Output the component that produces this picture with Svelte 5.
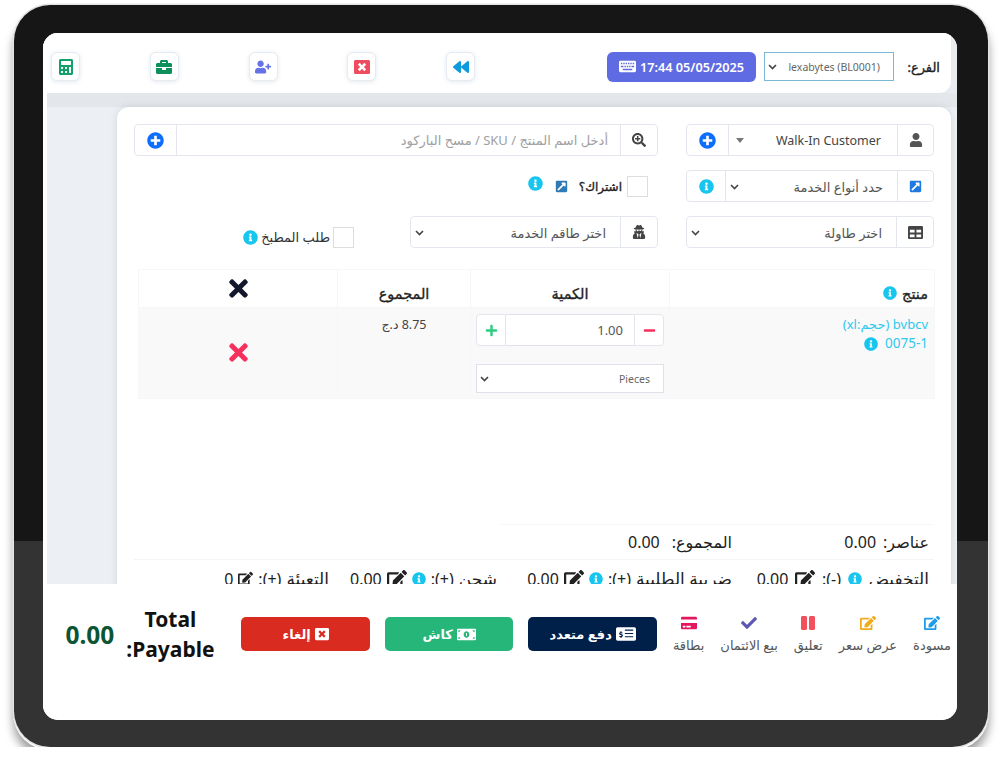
<script>
  const icons = {
    plusCircle: [512, 'M256 8C119 8 8 119 8 256s111 248 248 248 248-111 248-248S393 8 256 8zm144 276c0 6.6-5.4 12-12 12h-92v92c0 6.6-5.4 12-12 12h-56c-6.6 0-12-5.4-12-12v-92h-92c-6.6 0-12-5.4-12-12v-56c0-6.6 5.4-12 12-12h92v-92c0-6.6 5.4-12 12-12h56c6.6 0 12 5.4 12 12v92h92c6.6 0 12 5.4 12 12v56z'],
    info: [512, 'M256 8C119.043 8 8 119.083 8 256c0 136.997 111.043 248 248 248s248-111.003 248-248C504 119.083 392.957 8 256 8zm0 110c23.196 0 42 18.804 42 42s-18.804 42-42 42-42-18.804-42-42 18.804-42 42-42zm56 254c0 6.627-5.373 12-12 12h-88c-6.627 0-12-5.373-12-12v-24c0-6.627 5.373-12 12-12h12v-64h-12c-6.627 0-12-5.373-12-12v-24c0-6.627 5.373-12 12-12h64c6.627 0 12 5.373 12 12v100h12c6.627 0 12 5.373 12 12v24z'],
    times: [352, 'M242.72 256l100.07-100.07c12.28-12.28 12.28-32.19 0-44.48l-22.24-22.24c-12.28-12.28-32.19-12.28-44.48 0L176 189.28 75.93 89.21c-12.28-12.28-32.19-12.28-44.48 0L9.21 111.45c-12.28 12.28-12.28 32.19 0 44.48L109.28 256 9.21 356.07c-12.28 12.28-12.28 32.19 0 44.48l22.24 22.24c12.28 12.28 32.2 12.28 44.48 0L176 322.72l100.07 100.07c12.28 12.28 32.2 12.28 44.48 0l22.24-22.24c12.28-12.28 12.28-32.19 0-44.48L242.72 256z'],
    user: [448, 'M224 256c70.7 0 128-57.3 128-128S294.7 0 224 0 96 57.3 96 128s57.3 128 128 128zm89.6 32h-16.7c-22.2 10.2-46.9 16-72.9 16s-50.6-5.8-72.9-16h-16.7C60.2 288 0 348.2 0 422.4V464c0 26.5 21.5 48 48 48h352c26.5 0 48-21.5 48-48v-41.6c0-74.2-60.2-134.4-134.4-134.4z'],
    userPlus: [640, 'M624 208h-64v-64c0-8.8-7.2-16-16-16h-32c-8.8 0-16 7.2-16 16v64h-64c-8.8 0-16 7.2-16 16v32c0 8.8 7.2 16 16 16h64v64c0 8.8 7.2 16 16 16h32c8.8 0 16-7.2 16-16v-64h64c8.8 0 16-7.2 16-16v-32c0-8.8-7.2-16-16-16zm-400 48c70.7 0 128-57.3 128-128S294.7 0 224 0 96 57.3 96 128s57.3 128 128 128zm89.6 32h-16.7c-22.2 10.2-46.9 16-72.9 16s-50.6-5.8-72.9-16h-16.7C60.2 288 0 348.2 0 422.4V464c0 26.5 21.5 48 48 48h352c26.5 0 48-21.5 48-48v-41.6c0-74.2-60.2-134.4-134.4-134.4z'],
    backward: [512, 'M11.5 280.6l192 160c20.6 17.2 52.5 2.8 52.5-24.6V96c0-27.4-31.9-41.8-52.5-24.6l-192 160c-15.3 12.8-15.3 36.4 0 49.2zm256 0l192 160c20.6 17.2 52.5 2.8 52.5-24.6V96c0-27.4-31.9-41.8-52.5-24.6l-192 160c-15.3 12.8-15.3 36.4 0 49.2z'],
    windowClose: [512, 'M464 32H48C21.5 32 0 53.5 0 80v352c0 26.5 21.5 48 48 48h416c26.5 0 48-21.5 48-48V80c0-26.5-21.5-48-48-48zm-83.6 290.5c4.8 4.8 4.8 12.6 0 17.4l-40.5 40.5c-4.8 4.8-12.6 4.8-17.4 0L256 313.3l-66.5 67.1c-4.8 4.8-12.6 4.8-17.4 0l-40.5-40.5c-4.8-4.8-4.8-12.6 0-17.4l67.1-66.5-67.1-66.5c-4.8-4.8-4.8-12.6 0-17.4l40.5-40.5c4.8-4.8 12.6-4.8 17.4 0l66.5 67.1 66.5-67.1c4.8-4.8 12.6-4.8 17.4 0l40.5 40.5c4.8 4.8 4.8 12.6 0 17.4L313.3 256l67.1 66.5z'],
    briefcase: [512, 'M320 336c0 8.84-7.16 16-16 16h-96c-8.84 0-16-7.16-16-16v-48H0v144c0 25.6 22.4 48 48 48h416c25.6 0 48-22.4 48-48V288H320v48zm144-208h-80V80c0-25.6-22.4-48-48-48H176c-25.6 0-48 22.4-48 48v48H48c-25.6 0-48 22.4-48 48v80h512v-80c0-25.6-22.4-48-48-48zm-144 0H192V96h128v32z'],
    calculator: [448, 'M400 0H48C22.4 0 0 22.4 0 48v416c0 25.6 22.4 48 48 48h352c25.6 0 48-22.4 48-48V48c0-25.6-22.4-48-48-48zM128 435.2c0 6.4-6.4 12.8-12.8 12.8H76.8c-6.4 0-12.8-6.4-12.8-12.8v-38.4c0-6.4 6.4-12.8 12.8-12.8h38.4c6.4 0 12.8 6.4 12.8 12.8v38.4zm0-128c0 6.4-6.4 12.8-12.8 12.8H76.8c-6.4 0-12.8-6.4-12.8-12.8v-38.4c0-6.4 6.4-12.8 12.8-12.8h38.4c6.4 0 12.8 6.4 12.8 12.8v38.4zm128 128c0 6.4-6.4 12.8-12.8 12.8h-38.4c-6.4 0-12.8-6.4-12.8-12.8v-38.4c0-6.4 6.4-12.8 12.8-12.8h38.4c6.4 0 12.8 6.4 12.8 12.8v38.4zm0-128c0 6.4-6.4 12.8-12.8 12.8h-38.4c-6.4 0-12.8-6.4-12.8-12.8v-38.4c0-6.4 6.4-12.8 12.8-12.8h38.4c6.4 0 12.8 6.4 12.8 12.8v38.4zm128 128c0 6.4-6.4 12.8-12.8 12.8h-38.4c-6.4 0-12.8-6.4-12.8-12.8V268.8c0-6.4 6.4-12.8 12.8-12.8h38.4c6.4 0 12.8 6.4 12.8 12.8v166.4zm0-256c0 6.4-6.4 12.8-12.8 12.8H76.8c-6.4 0-12.8-6.4-12.8-12.8V76.8C64 70.4 70.4 64 76.8 64h294.4c6.4 0 12.8 6.4 12.8 12.8v102.4z'],
    searchPlus: [512, 'M304 192v32c0 6.6-5.4 12-12 12h-56v56c0 6.6-5.4 12-12 12h-32c-6.6 0-12-5.4-12-12v-56h-56c-6.6 0-12-5.4-12-12v-32c0-6.6 5.4-12 12-12h56v-56c0-6.6 5.4-12 12-12h32c6.6 0 12 5.4 12 12v56h56c6.6 0 12 5.4 12 12zm201 284.7L476.7 505c-9.4 9.4-24.6 9.4-33.9 0L343 405.3c-4.5-4.5-7-10.6-7-17V372c-35.3 27.6-79.7 44-128 44C93.1 416 0 322.9 0 208S93.1 0 208 0s208 93.1 208 208c0 48.3-16.4 92.7-44 128h16.3c6.4 0 12.5 2.5 17 7l99.7 99.7c9.3 9.4 9.3 24.6 0 34zM344 208c0-75.2-60.8-136-136-136S72 132.8 72 208s60.8 136 136 136 136-60.8 136-136z'],
    external: [448, 'M448 80v352c0 26.51-21.49 48-48 48H48c-26.51 0-48-21.49-48-48V80c0-26.51 21.49-48 48-48h352c26.51 0 48 21.49 48 48zm-88 16H248.029c-21.313 0-32.08 25.861-16.971 40.971l31.984 31.987L67.515 364.485c-4.686 4.686-4.686 12.284 0 16.971l31.029 31.029c4.687 4.686 12.285 4.686 16.971 0l195.526-195.526 31.988 31.991C357.058 263.977 384 253.425 384 231.979V120c0-13.255-10.745-24-24-24z'],
    table: [512, 'M464 32H48C21.49 32 0 53.49 0 80v352c0 26.51 21.49 48 48 48h416c26.51 0 48-21.49 48-48V80c0-26.51-21.49-48-48-48zM224 416H64v-96h160v96zm0-160H64v-96h160v96zm224 160H288v-96h160v96zm0-160H288v-96h160v96z'],
    edit: [576, 'M402.6 83.2l90.2 90.2c3.8 3.8 3.8 10 0 13.8L274.4 405.6l-92.8 10.3c-12.4 1.4-22.9-9.1-21.5-21.5l10.3-92.8L388.8 83.2c3.8-3.8 10-3.8 13.8 0zm162-22.9l-48.8-48.8c-15.2-15.2-39.9-15.2-55.2 0l-35.4 35.4c-3.8 3.8-3.8 10 0 13.8l90.2 90.2c3.8 3.8 10 3.8 13.8 0l35.4-35.4c15.2-15.3 15.2-40 0-55.2zM384 346.2V448H64V128h229.8c3.2 0 6.2-1.3 8.5-3.5l40-40c7.6-7.6 2.2-20.5-8.5-20.5H48C21.5 64 0 85.5 0 112v352c0 26.5 21.5 48 48 48h352c26.5 0 48-21.5 48-48V306.2c0-10.7-12.9-16-20.5-8.5l-40 40c-2.2 2.3-3.5 5.3-3.5 8.5z'],
    pause: [448, 'M144 479H48c-26.5 0-48-21.5-48-48V79c0-26.5 21.5-48 48-48h96c26.5 0 48 21.5 48 48v352c0 26.5-21.5 48-48 48zm304-48V79c0-26.5-21.5-48-48-48h-96c-26.5 0-48 21.5-48 48v352c0 26.5 21.5 48 48 48h96c26.5 0 48-21.5 48-48z'],
    check: [512, 'M173.898 439.404l-166.4-166.4c-9.997-9.997-9.997-26.206 0-36.204l36.203-36.204c9.997-9.998 26.207-9.998 36.204 0L192 312.69 432.095 72.596c9.997-9.997 26.207-9.997 36.204 0l36.203 36.204c9.997 9.997 9.997 26.206 0 36.204l-294.4 294.401c-9.998 9.997-26.207 9.997-36.204-.001z'],
    card: [576, 'M0 432c0 26.5 21.5 48 48 48h480c26.5 0 48-21.5 48-48V256H0v176zm192-68c0-6.6 5.4-12 12-12h136c6.6 0 12 5.4 12 12v40c0 6.6-5.4 12-12 12H204c-6.6 0-12-5.4-12-12v-40zm-128 0c0-6.6 5.4-12 12-12h72c6.6 0 12 5.4 12 12v40c0 6.6-5.4 12-12 12H76c-6.6 0-12-5.4-12-12v-40zM576 80v48H0V80c0-26.5 21.5-48 48-48h480c26.5 0 48 21.5 48 48z'],
    plus: [448, 'M416 208H272V64c0-17.67-14.33-32-32-32h-32c-17.67 0-32 14.33-32 32v144H32c-17.67 0-32 14.33-32 32v32c0 17.67 14.33 32 32 32h144v144c0 17.67 14.33 32 32 32h32c17.67 0 32-14.33 32-32V304h144c17.67 0 32-14.33 32-32v-32c0-17.67-14.33-32-32-32z'],
    minus: [448, 'M416 208H32c-17.67 0-32 14.33-32 32v32c0 17.67 14.33 32 32 32h384c17.67 0 32-14.33 32-32v-32c0-17.67-14.33-32-32-32z'],
    secret: [448, 'M383.9 308.3l23.9-62.6c4-10.5-3.7-21.7-15-21.7h-58.5c11-18.9 17.8-40.6 17.8-64v-.3c39.2-7.8 64-19.1 64-31.7 0-13.3-27.3-25.1-70.1-33-9.2-32.8-27-65.8-40.6-82.8-9.5-11.9-25.9-15.6-39.5-8.8l-27.6 13.8c-9 4.5-19.6 4.5-28.6 0L182.1 3.4c-13.6-6.8-30-3.1-39.5 8.8-13.5 17-31.4 50-40.6 82.8-42.7 7.9-70 19.7-70 33 0 12.6 24.8 23.9 64 31.7v.3c0 23.4 6.8 45.1 17.8 64H56.3c-11.5 0-19.2 11.7-14.7 22.3l25.8 60.2C27.3 329.8 0 372.7 0 422.4v44.8C0 491.9 20.1 512 44.8 512h358.4c24.7 0 44.8-20.1 44.8-44.8v-44.8c0-48.4-25.8-90.4-64.1-114.1zM176 480l-41.6-192 49.6 32 24 40-32 120zm96 0l-32-120 24-40 49.6-32L272 480zm41.7-298.5c-3.9 11.9-7 24.6-16.5 33.4-10.1 9.3-48 22.4-64-25-2.8-8.4-15.4-8.4-18.3 0-17 50.2-56 32.4-64 25-9.5-8.8-12.7-21.5-16.5-33.4-.8-2.5-6.3-5.7-6.3-5.8v-10.8c28.3 3.6 61 5.8 96 5.8s67.7-2.2 96-5.8v10.8c-.1.1-5.6 3.2-6.4 5.8z'],
    keyboard: [576, 'M528 448H48c-26.51 0-48-21.49-48-48V112c0-26.51 21.49-48 48-48h480c26.51 0 48 21.49 48 48v288c0 26.51-21.49 48-48 48zM64 128v48h48v-48zm80 0v48h48v-48zm80 0v48h48v-48zm80 0v48h48v-48zm80 0v48h48v-48zm80 0v48h48v-48zM64 232v48h88v-48zm120 0v48h48v-48zm80 0v48h48v-48zm80 0v48h48v-48zm80 0v48h88v-48zM128 336v48h320v-48z'],
    bill: [640, 'M608 64H32C14.3 64 0 78.3 0 96v320c0 17.7 14.3 32 32 32h576c17.7 0 32-14.3 32-32V96c0-17.7-14.3-32-32-32zM48 400v-64c35 0 64 29 64 64zm0-224v-64h64c0 35-29 64-64 64zm272 192c-53 0-96-50-96-112s43-112 96-112 96 50 96 112-43 112-96 112zm272 32h-64c0-35 29-64 64-64zm0-224c-35 0-64-29-64-64h64zM304 208h32v96h-32z'],
    multi: [576, 'M528 64H48C21.5 64 0 85.5 0 112v288c0 26.5 21.5 48 48 48h480c26.5 0 48-21.5 48-48V112c0-26.5-21.5-48-48-48zM160 368h-32v-24c-17 0-34-8-40-24l28-16c3 7 8 10 16 10 14 0 30-2 30-12 0-8-12-10-30-16-24-8-42-16-42-42 0-20 16-36 38-40v-24h32v24c14 2 28 10 34 22l-26 16c-4-6-10-8-18-8-10 0-22 2-22 10 0 6 8 8 26 14 26 8 46 18 46 44 0 24-18 38-40 42zm336-16H256v-32h240zm0-96H256v-32h240zm0-96H256v-32h240z']
  };

  const tools = [
    { name: 'backward', color: '#0e9bdc' },
    { name: 'windowClose', color: '#ee4d5f' },
    { name: 'userPlus', color: '#6671e5' },
    { name: 'briefcase', color: '#0f8f5c' },
    { name: 'calculator', color: '#14a06a' }
  ];

  const actions = [
    { label: 'مسودة', name: 'edit', color: '#1e9be9' },
    { label: 'عرض سعر', name: 'edit', color: '#efac1c' },
    { label: 'تعليق', name: 'pause', color: '#f2505a' },
    { label: 'بيع الائتمان', name: 'check', color: '#5d58b4' },
    { label: 'بطاقة', name: 'card', color: '#e2175f' }
  ];

  // the info icon sits inside the label on the discount, after it on the others
  const charges = [
    { label: 'التخفيض', sign: '(-):', value: '0.00', info: 'inside', edit: 20 },
    { label: 'ضريبة الطلبية', sign: '(+):', value: '0.00', info: 'after', edit: 20 },
    { label: 'شحن', sign: '(+):', value: '0.00', info: 'after', edit: 20 },
    { label: 'التعبئة', sign: '(+):', value: '0', info: '', edit: 15 }
  ];
</script>

{#snippet icon(name, size, color)}
  <svg class="icon" width={size} height={size} viewBox="0 0 {icons[name][0]} 512" fill={color} aria-hidden="true">
    <path d={icons[name][1]} />
  </svg>
{/snippet}

{#snippet chevron()}
  <svg class="chevron" width="9" height="6" viewBox="0 0 9 6" fill="none" stroke="#444" stroke-width="1.6" aria-hidden="true">
    <path d="M1 1l3.5 3.5L8 1" />
  </svg>
{/snippet}

<div class="device">
  <div class="screen" dir="rtl">
    <div class="topbar-wrap">
      <header class="topbar">
        <span class="branch-label">الفرع:</span>
        <div class="branch-select">
          <span>lexabytes (BL0001)</span>
          {@render chevron()}
        </div>
        <button class="clock" dir="ltr">
          {@render icon('keyboard', 17, '#fff')}
          <span>17:44 05/05/2025</span>
        </button>
        <div class="tools">
          {#each tools as t}
            <button class="tool">{@render icon(t.name, 16, t.color)}</button>
          {/each}
        </div>
      </header>
    </div>

    <main class="main">
      <section class="card">
        <div class="form">
          <div class="group">
            <span class="addon">{@render icon('user', 14, '#555')}</span>
            <div class="field">
              <span class="field-text dark">Walk-In Customer</span>
              <span class="caret"></span>
            </div>
            <span class="addon wide">{@render icon('plusCircle', 17, '#0d6efd')}</span>
          </div>
          <div class="group search">
            <span class="addon search-addon">{@render icon('searchPlus', 14, '#444')}</span>
            <input class="search-input" placeholder="أدخل اسم المنتج / SKU / مسح الباركود" />
            <span class="addon wide">{@render icon('plusCircle', 17, '#0d6efd')}</span>
          </div>

          <div class="group">
            <span class="addon">{@render icon('external', 13, '#1f7ae0')}</span>
            <div class="field">
              <span class="field-text">حدد أنواع الخدمة</span>
              {@render chevron()}
            </div>
            <span class="addon mid">{@render icon('info', 15, '#17c6ee')}</span>
          </div>
          <div class="check-row subscribe">
            <input type="checkbox" class="check" />
            <span class="semi">اشتراك؟</span>
            <span class="gap-icon">{@render icon('external', 13, '#2f79b5')}</span>
            <span class="up-icon">{@render icon('info', 15, '#17c6ee')}</span>
          </div>
          <div></div>

          <div class="group">
            <span class="addon tall">{@render icon('table', 15, '#444')}</span>
            <div class="field">
              <span class="field-text">اختر طاولة</span>
              {@render chevron()}
            </div>
          </div>
          <div class="group">
            <span class="addon tall">{@render icon('secret', 14, '#444')}</span>
            <div class="field">
              <span class="field-text">اختر طاقم الخدمة</span>
              {@render chevron()}
            </div>
          </div>
          <div class="check-row kitchen">
            <input type="checkbox" class="check" />
            <span>طلب المطبخ</span>
            {@render icon('info', 15, '#17c6ee')}
          </div>
        </div>

        <table class="items">
          <thead>
            <tr>
              <th class="col-product"><span class="th-flex">منتج {@render icon('info', 14, '#17c6ee')}</span></th>
              <th class="col-qty">الكمية</th>
              <th class="col-sum">المجموع</th>
              <th class="col-del"><span class="del-head">{@render icon('times', 27, '#14182b')}</span></th>
            </tr>
          </thead>
          <tbody>
            <tr>
              <td class="product">
                <div>bvbcv (حجم:xl)</div>
                <div class="sku">0075-1 {@render icon('info', 14, '#17c6ee')}</div>
              </td>
              <td class="qty">
                <div class="stepper">
                  <button class="step">{@render icon('minus', 13, '#f4305c')}</button>
                  <input class="qty-input" value="1.00" />
                  <button class="step">{@render icon('plus', 13, '#2ecc80')}</button>
                </div>
                <div class="unit">
                  <span>Pieces</span>
                  {@render chevron()}
                </div>
              </td>
              <td class="sum">8.75 د.ج</td>
              <td class="del">{@render icon('times', 27, '#f5305c')}</td>
            </tr>
          </tbody>
        </table>

        <div class="totals">
          <div class="totals-row">
            <div class="stat"><span>عناصر:</span><span>0.00</span></div>
            <div class="stat wide-gap"><span>المجموع:</span><span>0.00</span></div>
          </div>
          <div class="charges">
            {#each charges as c}
              <div class="stat tight" class:spread={c.info === 'inside'}>
                <span class="charge-label">{c.label}</span>
                {#if c.info === 'inside'}{@render icon('info', 14, '#17c6ee')}{/if}
                <span>{c.sign}</span>
                {#if c.info === 'after'}{@render icon('info', 14, '#17c6ee')}{/if}
                {@render icon('edit', c.edit, '#222')}
                <span>{c.value}</span>
              </div>
            {/each}
          </div>
        </div>
      </section>
    </main>

    <footer class="footer">
      <div class="actions">
        {#each actions as a}
          <div class="action">
            {@render icon(a.name, 16, a.color)}
            <span>{a.label}</span>
          </div>
        {/each}
      </div>
      <button class="pay navy">{@render icon('multi', 20, '#fff')} دفع متعدد</button>
      <button class="pay green">{@render icon('bill', 19, '#fff')} كاش</button>
      <button class="pay red">{@render icon('windowClose', 14, '#fff')} إلغاء</button>
      <div class="payable">Total Payable:</div>
      <div class="grand">0.00</div>
    </footer>
  </div>
</div>

<style>
  :global(body) {
    margin: 0;
    background: #fff;
  }
  button {
    font: inherit;
    cursor: pointer;
  }
  .icon {
    display: block;
    flex: none;
  }
  .chevron {
    flex: none;
  }

  /* tablet frame */
  .device {
    box-sizing: border-box;
    width: 974px;
    height: 742px;
    margin: 5px 0 0 14px;
    padding: 28px 31px 27px 29px;
    border-radius: 36px;
    background: linear-gradient(#161616 0, #161616 536px, #333 536px);
    box-shadow: 0 0 0 1.5px #e4e4e4, 0 2px 0 1px #fff, 0 10px 10px 1px rgba(0, 0, 0, 0.38);
  }
  .screen {
    display: flex;
    flex-direction: column;
    height: 100%;
    overflow: hidden;
    border-radius: 15px;
    background: #fff;
    color: #444;
    font-family: "Noto Sans", "Open Sans", "DejaVu Sans", sans-serif;
    font-size: 13px;
  }
  .semi,
  .branch-label,
  .items th {
    font-weight: 400;
    -webkit-text-stroke: 0.35px currentColor;
  }

  /* top bar */
  .topbar-wrap {
    flex: none;
    padding-right: 6px;
    background: #e8ebef;
  }
  .topbar {
    display: flex;
    align-items: center;
    height: 60px;
    box-sizing: border-box;
    padding: 7px 11px 0 0;
    border-radius: 0 0 12px 0;
    background: #fff;
  }
  .branch-label {
    width: 31px;
    color: #222;
    font-size: 13px;
    white-space: nowrap;
  }
  .branch-select {
    display: flex;
    align-items: center;
    justify-content: space-between;
    box-sizing: border-box;
    width: 130px;
    height: 29px;
    margin-right: 15px;
    padding: 0 13px 0 3px;
    border: 1px solid #7ab8d6;
    color: #666;
    font-size: 10.5px;
    white-space: nowrap;
  }
  .clock {
    display: flex;
    align-items: center;
    justify-content: center;
    gap: 4px;
    width: 149px;
    height: 30px;
    margin-right: 8px;
    border: 0;
    border-radius: 6px;
    background: #5f6be2;
    color: #fff;
    font-size: 12.7px;
    font-weight: 600;
  }
  .tools {
    display: flex;
    justify-content: space-between;
    width: 424px;
    margin-right: 132px;
  }
  .tool {
    display: flex;
    align-items: center;
    justify-content: center;
    width: 29px;
    height: 29px;
    padding: 0;
    border: 1px solid #e6ebf1;
    border-radius: 6px;
    background: #fff;
    box-shadow: 0 1px 4px rgba(90, 110, 150, 0.16);
  }

  /* content */
  .main {
    flex: 1;
    min-height: 0;
    margin-left: 4px;
    overflow: hidden;
    padding: 14px 6px 0 0;
    background: linear-gradient(#e3e6ea 0, #e3e6ea 14px, #ecf0f4 14px);
  }
  .card {
    box-sizing: border-box;
    height: 700px;
    width: 834px;
    padding: 17px 17px 0;
    border-radius: 12px 12px 0 0;
    background: #fff;
    box-shadow: 0 0 6px rgba(120, 135, 155, 0.25);
  }
  .form {
    display: grid;
    grid-template-columns: repeat(3, 248px);
    grid-auto-rows: 32px;
    gap: 14px 28px;
  }
  .group {
    display: flex;
    align-items: stretch;
    overflow: hidden;
    border: 1px solid #e4e6ee;
    border-radius: 4px;
  }
  .search {
    grid-column: span 2;
  }
  .addon {
    display: flex;
    flex: none;
    align-items: center;
    justify-content: center;
    width: 35px;
  }
  .addon.tall,
  .addon.search-addon {
    width: 36px;
  }
  .addon.wide {
    width: 41px;
    border-right: 1px solid #e4e6ee;
  }
  .addon.mid {
    width: 38px;
    border-right: 1px solid #e4e6ee;
  }
  .field {
    display: flex;
    flex: 1;
    align-items: center;
    justify-content: space-between;
    padding: 1px 14px 0 4px;
    border-right: 1px solid #e4e6ee;
    font-size: 13px;
    color: #555;
  }
  .field-text.dark {
    color: #444;
    font-size: 12.5px;
    padding-right: 2px;
  }
  .caret {
    width: 0;
    height: 0;
    margin-left: 3px;
    border: 4px solid transparent;
    border-top: 5px solid #777;
    border-bottom: 0;
  }
  .search-input {
    flex: 1;
    min-width: 0;
    padding: 0 12px;
    border: 0;
    border-right: 1px solid #e4e6ee;
    font: inherit;
    outline: none;
  }
  .search-input::placeholder {
    color: #a0a0a0;
  }
  .check-row {
    display: flex;
    align-items: center;
    gap: 5px;
    color: #333;
  }
  .check {
    appearance: none;
    width: 21px;
    height: 21px;
    margin: 0;
    border: 1px solid #ddd;
    background: #fff;
  }
  .subscribe {
    padding-right: 10px;
    color: #222;
  }
  .semi {
    font-size: 12px;
  }
  .gap-icon {
    margin-right: 6px;
  }
  .up-icon {
    margin-right: 7px;
    margin-top: -6px;
  }
  .kitchen {
    gap: 3px;
    padding: 10px 28px 0 0;
    font-size: 13px;
  }

  /* item table */
  .items {
    table-layout: fixed;
    width: 797px;
    margin: 21px 0 0 4px;
    margin-right: -1px;
    border-collapse: collapse;
  }
  .items th {
    box-sizing: border-box;
    height: 38px;
    padding: 8px 0 0;
    border: 1px solid #f6f7f9;
    color: #222;
    font-size: 14.5px;
    vertical-align: middle;
  }
  .col-product {
    width: 265px;
    text-align: right;
  }
  .col-qty {
    width: 199px;
  }
  .col-sum {
    width: 133px;
  }
  .th-flex {
    display: flex;
    align-items: center;
    gap: 5px;
    padding-right: 6px;
  }
  .del-head {
    display: flex;
    justify-content: center;
    margin-top: -8px;
  }
  .items td {
    height: 91px;
    box-sizing: border-box;
    padding: 0;
    border: 1px solid #f6f7f9;
    background: #f9f9fa;
    vertical-align: top;
  }
  .items .product {
    padding: 7px 6px 0 0;
    color: #2fc8ee;
    font-size: 13px;
    line-height: 19px;
  }
  .sku {
    display: flex;
    align-items: center;
    gap: 7px;
    font-size: 13.5px;
  }
  .items .qty {
    padding: 6px 5px 0;
  }
  .stepper {
    display: flex;
    height: 32px;
  }
  .step {
    display: flex;
    align-items: center;
    justify-content: center;
    box-sizing: border-box;
    width: 30px;
    padding: 0;
    border: 1px solid #e4e6ee;
    border-radius: 0 4px 4px 0;
    background: #fff;
  }
  .step:last-child {
    border-radius: 4px 0 0 4px;
  }
  .qty-input {
    flex: 1;
    min-width: 0;
    padding: 0 11px;
    border: 1px solid #e0e1ea;
    border-width: 1px 0;
    background: #fff;
    color: #555;
    font: inherit;
    outline: none;
  }
  .unit {
    display: flex;
    align-items: center;
    justify-content: space-between;
    box-sizing: border-box;
    height: 29px;
    margin-top: 18px;
    padding: 0 13px 0 3px;
    border: 1px solid #e0e1ea;
    background: #fff;
    color: #666;
    font-size: 10.5px;
  }
  .items .sum {
    padding-top: 8px;
    text-align: center;
    font-size: 12.5px;
    color: #444;
  }
  .items .del {
    vertical-align: middle;
  }
  .del .icon {
    margin: 0 auto 2px;
  }

  /* totals under the table */
  .totals {
    margin-top: 125px;
    color: #222;
    font-size: 16px;
  }
  .totals-row {
    display: grid;
    grid-template-columns: 197px 235px;
    align-items: center;
    box-sizing: border-box;
    width: 434px;
    height: 36px;
    margin-left: auto;
    padding-right: 5px;
    border-top: 1px solid #f6f7f9;
    border-bottom: 1px solid #f4f5f7;
  }
  .charges {
    display: grid;
    grid-template-columns: 197px 235px 168px auto;
    margin-top: -1px;
    padding: 7px 5px 0 0;
    border-top: 1px solid #f4f5f7;
  }
  .charge-label {
    font-size: 17px;
  }
  .stat {
    display: flex;
    align-items: center;
    gap: 7px;
    white-space: nowrap;
  }
  .stat.wide-gap {
    gap: 12px;
  }
  .stat.tight {
    gap: 5px;
  }
  .stat.spread {
    gap: 6.75px;
  }

  /* bottom bar */
  .footer {
    display: flex;
    flex: none;
    align-items: center;
    height: 136px;
    box-sizing: border-box;
    padding: 0 6px 36px 0;
    background: #fff;
  }
  .actions {
    display: flex;
    gap: 16px;
    margin-left: 16px;
  }
  .action {
    display: flex;
    flex-direction: column;
    align-items: center;
    gap: 5px;
    color: #555;
    font-size: 13px;
    white-space: nowrap;
  }
  .pay {
    display: flex;
    align-items: center;
    justify-content: center;
    gap: 4px;
    box-sizing: border-box;
    width: 128.5px;
    height: 34px;
    margin-left: 15px;
    border: 0;
    border-radius: 5px;
    color: #fff;
    font-size: 13px;
    font-weight: 600;
  }
  .navy {
    background: #00204a;
  }
  .green {
    background: #27b67a;
  }
  .red {
    margin-left: 0;
    background: #d92b20;
  }
  .payable {
    width: 100px;
    margin-right: 21px;
    color: #111;
    font-size: 21px;
    font-weight: 700;
    line-height: 30px;
    text-align: center;
  }
  .grand {
    margin-right: 6px;
    color: #0b5535;
    font-size: 24.5px;
    font-weight: 700;
  }
</style>
